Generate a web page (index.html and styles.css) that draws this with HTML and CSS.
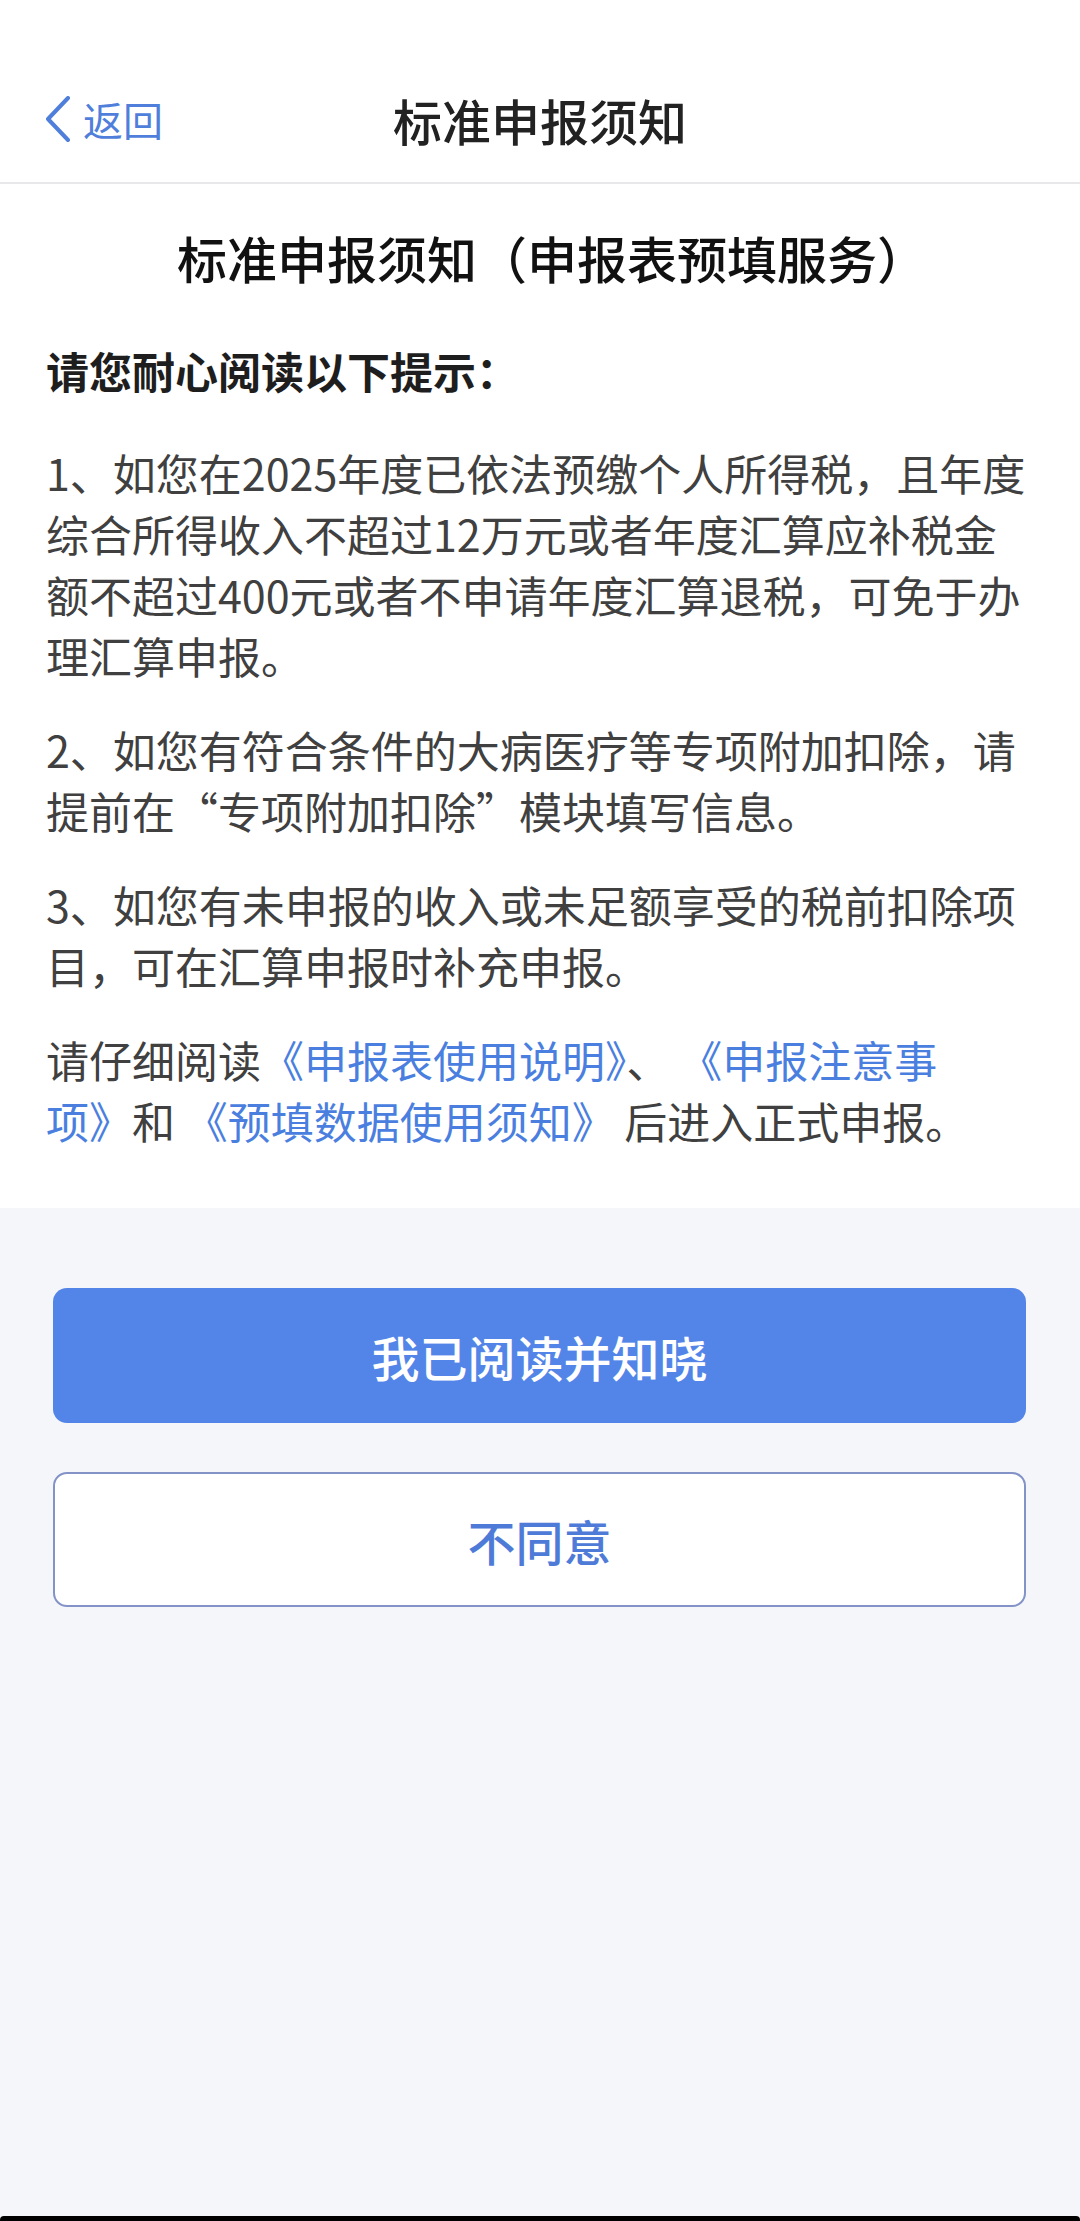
FILE: index.html
```html
<!DOCTYPE html>
<html lang="zh-CN">
<head>
  <meta charset="UTF-8" />
  <meta name="viewport" content="width=device-width, initial-scale=1.0"/>
  <title>标准申报须知</title>
  <link rel="stylesheet" href="styles.css">
</head>
<body>

  <div class="page">
    <header class="nav-bar">
      <a class="back-btn" href="#">
        <svg class="back-icon" width="26" height="46" viewBox="0 0 26 46">
          <polyline points="23,2 3,23 23,44" />
        </svg>
        <span>返回</span>
      </a>
      <h1 class="nav-title">标准申报须知</h1>
    </header>

    <section class="notice">
      <h2>标准申报须知（申报表预填服务）</h2>
      <p class="lead">请您耐心阅读以下提示：</p>
      <p>1、如您在2025年度已依法预缴个人所得税，且年度<br>综合所得收入不超过12万元或者年度汇算应补税金<br>额不超过400元或者不申请年度汇算退税，可免于办<br>理汇算申报。</p>
      <p>2、如您有符合条件的大病医疗等专项附加扣除，请<br>提前在“专项附加扣除”模块填写信息。</p>
      <p>3、如您有未申报的收入或未足额享受的税前扣除项<br>目，可在汇算申报时补充申报。</p>
      <p>请仔细阅读<a class="doc-link" href="#">《申报表使用说明》</a>、 <a class="doc-link" href="#">《申报注意事<br>项》</a>和 <a class="doc-link" href="#">《预填数据使用须知》</a> 后进入正式申报。</p>
    </section>

    <div class="actions">
      <button class="btn btn-primary">我已阅读并知晓</button>
      <button class="btn btn-outline">不同意</button>
    </div>
  </div>

  <div class="home-edge"></div>

</body>
</html>
```

FILE: styles.css
```css
body {
  margin: 0;
  padding: 0;
  min-height: 2221px;
  display: flex;
  flex-direction: column;
  background: #f5f6f9;
  font-family: "Noto Sans CJK SC", "Noto Sans", sans-serif;
  color: #404040;
}

.page {
  flex: 1;
}

/* top navigation */
.nav-bar {
  display: grid;
  grid-template-columns: 1fr auto 1fr;
  align-items: center;
  height: 126px;
  padding-top: 56px;
  background: #fff;
  border-bottom: 2px solid #e8e8ea;
}

.back-btn {
  display: flex;
  align-items: center;
  gap: 12px;
  padding-left: 45px;
  color: #4f7fdb;
  font-size: 40px;
  text-decoration: none;
}

.back-icon polyline {
  fill: none;
  stroke: #4f7fdb;
  stroke-width: 4;
  stroke-linecap: round;
  stroke-linejoin: round;
}

.nav-title {
  margin: 0;
  font-size: 49px;
  font-weight: 500;
  color: #222;
}

/* notice text */
.notice {
  background: #fff;
  padding: 41px 24px 57px 46px;
}

.notice h2 {
  margin: 0;
  padding-left: 2px;
  text-align: center;
  font-size: 50px;
  line-height: 64px;
  font-weight: 500;
  color: #111;
}

.notice p {
  margin: 0 0 33px;
  font-size: 43px;
  line-height: 61px;
}

.notice p:last-child {
  margin-bottom: 0;
}

.notice .lead {
  margin: 51px 0 41px;
  font-weight: bold;
  color: #1e1e1e;
}

.doc-link {
  color: #4a7fe0;
  text-decoration: none;
}

/* buttons */
.actions {
  display: flex;
  flex-direction: column;
  gap: 49px;
  padding: 80px 54px 0 53px;
}

.btn {
  height: 135px;
  border-radius: 14px;
  font-family: inherit;
  font-size: 48px;
  font-weight: 500;
  cursor: pointer;
}

.btn-primary {
  background: #5385e8;
  color: #fff;
  border: none;
}

.btn-outline {
  background: #fff;
  color: #4f7bd8;
  border: 2px solid #8393c8;
}

.home-edge {
  height: 5px;
  background: #000;
  border-radius: 4px 4px 0 0;
}
```
